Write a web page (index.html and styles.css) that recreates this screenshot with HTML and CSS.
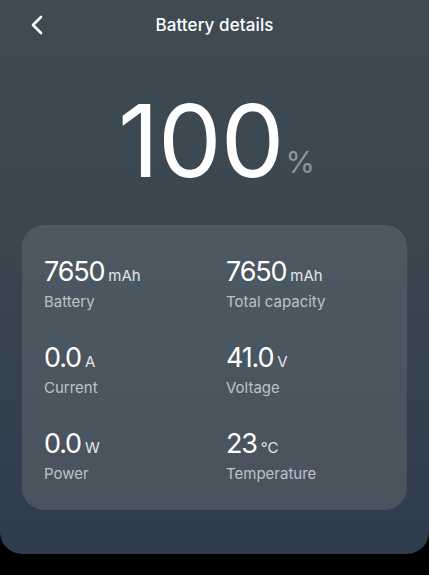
FILE: index.html
```html
<!DOCTYPE html>
<html>
<head>
    <title>Battery details</title>
    <link rel="stylesheet" href="styles.css">
</head>
<body>
    <div class="screen">
        <div class="header">
            <div class="back">
                <svg width="14" height="20" viewBox="0 0 14 20">
                    <path d="M11 2 L3 10 L11 18" fill="none" stroke="#fff" stroke-width="2.6" stroke-linecap="round" stroke-linejoin="round"/>
                </svg>
            </div>
            <div class="title">Battery details</div>
            <div></div>
        </div>

        <div class="hero"><span class="level">100</span><span class="percent">%</span></div>

        <div class="card">
            <div class="item">
                <div class="value">7650<span class="unit">mAh</span></div>
                <div class="label">Battery</div>
            </div>
            <div class="item">
                <div class="value">7650<span class="unit">mAh</span></div>
                <div class="label">Total capacity</div>
            </div>
            <div class="item">
                <div class="value">0.0<span class="unit">A</span></div>
                <div class="label">Current</div>
            </div>
            <div class="item">
                <div class="value">41.0<span class="unit">V</span></div>
                <div class="label">Voltage</div>
            </div>
            <div class="item">
                <div class="value">0.0<span class="unit">W</span></div>
                <div class="label">Power</div>
            </div>
            <div class="item">
                <div class="value">23<span class="unit">°C</span></div>
                <div class="label">Temperature</div>
            </div>
        </div>
    </div>
</body>
</html>
```

FILE: styles.css
```css
body {
    margin: 0;
    background: #000;
    font-family: Inter, "Noto Sans", sans-serif;
    color: #fff;
}
.screen {
    height: 554px;
    border-radius: 0 0 22px 22px;
    background: linear-gradient(180deg, #3e4b53 0%, #3a4750 40%, #2f3c4e 100%);
    overflow: hidden;
}
.header {
    display: grid;
    grid-template-columns: 1fr auto 1fr;
    align-items: center;
    height: 50px;
}
.back {
    display: flex;
    align-items: center;
    padding-left: 30px;
    height: 50px;
}
.back svg {
    display: block;
}
.title {
    font-size: 17px;
    font-weight: 500;
    line-height: 50px;
    letter-spacing: 0.1px;
}
.hero {
    margin-top: 40px;
    height: 100px;
    line-height: 100px;
    text-align: center;
    padding-left: 4px;
}
.level {
    font-size: 101px;
    font-weight: 400;
    letter-spacing: -1px;
}
.percent {
    font-size: 30px;
    line-height: 1;
    color: #8b969d;
    margin-left: 2px;
    vertical-align: 4px;
}
.card {
    display: grid;
    grid-template-columns: 182px 1fr;
    row-gap: 30px;
    margin: 35px 22px 0;
    padding: 31px 22px 26px;
    border-radius: 22px;
    background: linear-gradient(180deg, #4c5862 0%, #48535e 100%);
}
.value {
    font-size: 27px;
    line-height: 32px;
    font-weight: 400;
    letter-spacing: -1.2px;
}
.unit {
    font-size: 15px;
    line-height: 1;
    color: #e2e6e9;
    margin-left: 4px;
    letter-spacing: 0;
}
.label {
    margin-top: 4px;
    font-size: 15px;
    line-height: 20px;
    color: #bcc3c9;
}
```
